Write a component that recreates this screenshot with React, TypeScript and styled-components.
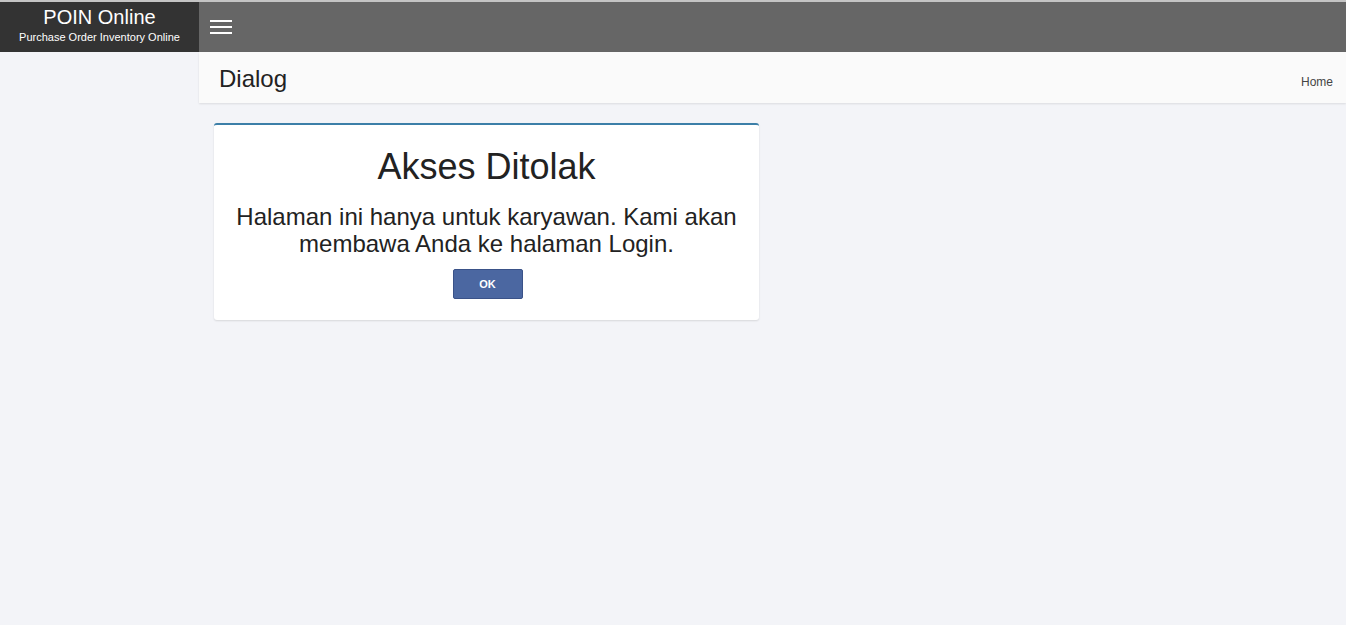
import React from "react";
import styled, { createGlobalStyle } from "styled-components";

const Global = createGlobalStyle`
  html, body { margin: 0; padding: 0; }
  body {
    background: #f3f4f8;
    font-family: "Liberation Sans", Arial, sans-serif;
    color: #333;
  }
`;

const Page = styled.div`
  min-height: 625px;
  border-top: 2px solid #c4c4c4;
  box-sizing: border-box;
`;

const TopBar = styled.header`
  display: flex;
  height: 50px;
  background: #666666;
`;

const Logo = styled.div`
  width: 199px;
  background: #333333;
  color: #fff;
  display: flex;
  flex-direction: column;
  align-items: center;
  justify-content: center;
`;

const LogoTitle = styled.div`
  font-size: 20px;
  line-height: 22px;
  margin-top: -4px;
`;

const LogoSub = styled.div`
  font-size: 11px;
  line-height: 14px;
  margin-top: 2px;
`;

const Toggle = styled.button`
  border: 0;
  background: transparent;
  padding: 0 0 0 11px;
  display: flex;
  flex-direction: column;
  justify-content: center;
  gap: 4px;
  cursor: pointer;
`;

const Bar = styled.span`
  display: block;
  width: 22px;
  height: 2px;
  background: #fff;
`;

const Body = styled.div`
  display: flex;
`;

const Side = styled.aside`
  width: 199px;
  flex: none;
`;

const Main = styled.main`
  flex: 1;
`;

const ContentHeader = styled.div`
  display: flex;
  align-items: center;
  justify-content: space-between;
  height: 51px;
  padding: 3px 13px 0 20px;
  box-sizing: border-box;
  background: #fafafa;
  box-shadow: 0 1px 2px rgba(0, 0, 0, 0.1);
`;

const PageTitle = styled.h1`
  margin: 0;
  font-size: 24px;
  font-weight: 400;
  color: #222;
`;

const Crumb = styled.span`
  font-size: 12px;
  color: #444;
  margin-top: 6px;
`;

const Content = styled.section`
  padding: 20px 15px;
`;

const Card = styled.div`
  width: 545px;
  background: #fff;
  border-top: 2px solid #3c7fa8;
  border-radius: 3px;
  box-shadow: 0 1px 2px rgba(0, 0, 0, 0.12);
  text-align: center;
  padding: 22px 10px 21px;
  box-sizing: border-box;
`;

const CardTitle = styled.h2`
  margin: 0;
  font-size: 36px;
  font-weight: 400;
  line-height: 40px;
  color: #222;
`;

const Message = styled.p`
  margin: 16px 0 12px;
  font-size: 24px;
  line-height: 27px;
  color: #222;
`;

const OkButton = styled.button`
  width: 70px;
  height: 30px;
  background: #4b67a1;
  border: 1px solid #3a5288;
  border-radius: 2px;
  color: #fff;
  font-family: "Liberation Sans", Arial, sans-serif;
  font-size: 11px;
  font-weight: 700;
  cursor: pointer;
  margin-left: 2px;
`;

export default function App() {
  return (
    <>
      <Global />
      <Page>
        <TopBar>
          <Logo>
            <LogoTitle>POIN Online</LogoTitle>
            <LogoSub>Purchase Order Inventory Online</LogoSub>
          </Logo>
          <Toggle aria-label="menu">
            <Bar />
            <Bar />
            <Bar />
          </Toggle>
        </TopBar>
        <Body>
          <Side />
          <Main>
            <ContentHeader>
              <PageTitle>Dialog</PageTitle>
              <Crumb>Home</Crumb>
            </ContentHeader>
            <Content>
              <Card>
                <CardTitle>Akses Ditolak</CardTitle>
                <Message>
                  Halaman ini hanya untuk karyawan. Kami akan
                  <br />
                  membawa Anda ke halaman Login.
                </Message>
                <OkButton>OK</OkButton>
              </Card>
            </Content>
          </Main>
        </Body>
      </Page>
    </>
  );
}
